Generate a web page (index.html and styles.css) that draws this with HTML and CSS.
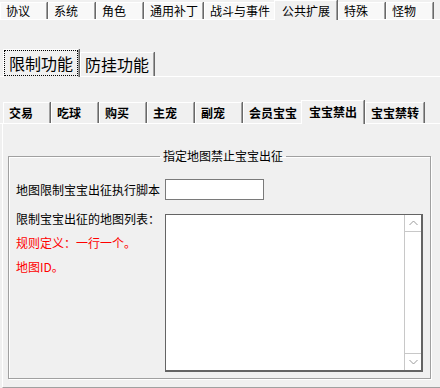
FILE: index.html
```html
<!DOCTYPE html>
<html lang="zh-CN">
<head>
  <meta charset="UTF-8" />
  <title>公共扩展 - 宝宝禁出</title>
  <link rel="stylesheet" href="styles.css">
</head>
<body>
  <div class="tabs top">
    <div class="tab">协议</div>
    <div class="tab">系统</div>
    <div class="tab">角色</div>
    <div class="tab">通用补丁</div>
    <div class="tab">战斗与事件</div>
    <div class="tab active">公共扩展</div>
    <div class="tab">特殊</div>
    <div class="tab">怪物</div>
  </div>

  <div class="tabs mid">
    <div class="tab active focus">限制功能</div>
    <div class="tab">防挂功能</div>
  </div>

  <div class="tabs sub">
    <div class="tab">交易</div>
    <div class="tab">吃球</div>
    <div class="tab">购买</div>
    <div class="tab">主宠</div>
    <div class="tab">副宠</div>
    <div class="tab">会员宝宝</div>
    <div class="tab active">宝宝禁出</div>
    <div class="tab">宝宝禁转</div>
  </div>

  <div class="page">
    <fieldset class="group">
      <legend>指定地图禁止宝宝出征</legend>
      <div class="form">
        <label class="field-label">地图限制宝宝出征执行脚本</label>
        <div class="textbox"></div>

        <div class="notes">
          <p>限制宝宝出征的地图列表：</p>
          <p class="red">规则定义：一行一个。</p>
          <p class="red">地图ID。</p>
        </div>
        <div class="memo">
          <div class="memo-text"></div>
          <div class="scrollbar">
            <div class="arrow up">
              <svg width="9" height="6" viewBox="0 0 9 6"><polyline points="0.5,5 4.5,1 8.5,5" fill="none" stroke="#9a9a9a" stroke-width="1"/></svg>
            </div>
            <div class="arrow down">
              <svg width="9" height="6" viewBox="0 0 9 6"><polyline points="0.5,1 4.5,5 8.5,1" fill="none" stroke="#9a9a9a" stroke-width="1"/></svg>
            </div>
          </div>
        </div>
      </div>
    </fieldset>
  </div>
</body>
</html>
```

FILE: styles.css
```css
* {
  box-sizing: border-box;
  margin: 0;
  padding: 0;
}

body {
  width: 440px;
  height: 388px;
  overflow: hidden;
  background: #f0f0f0;
  color: #000;
  font-family: "Noto Sans CJK SC", "Noto Sans", sans-serif;
  font-size: 12px;
}

/* tab strips */
.tabs {
  display: flex;
  align-items: flex-end;
  border-bottom: 1px solid #fff;
}

.tab {
  flex: none;
  min-width: 47px;
  margin-right: 1px;
  padding: 0 4px 0 5px;
  border-top: 1px solid #fff;
  border-left: 1px solid #fff;
  border-right: 1px solid #a0a0a0;
  box-shadow: 1px 0 0 #696969;
  white-space: nowrap;
  text-align: left;
}

.tab.active {
  position: relative;
  z-index: 1;
  margin-left: -2px;
  margin-bottom: -1px;
  padding: 0 6px 0 7px;
  background: #f0f0f0;
}

.top {
  height: 20px;
}

.top .tab {
  height: 17px;
  line-height: 16px;
  background: #f8f8f8;
}

.top .tab.active {
  height: 20px;
  line-height: 19px;
  background: #f0f0f0;
}

.mid {
  height: 57px;
  padding-left: 5px;
  font-size: 16px;
}

.mid .tab {
  height: 24px;
  line-height: 23px;
  padding: 0 4px;
}

.mid .tab.active {
  height: 28px;
  line-height: 26px;
  padding: 0 5px;
}

.tab.focus {
  outline: 1px dotted #000;
  outline-offset: -2px;
}

.sub {
  height: 47px;
  padding-left: 3px;
  font-weight: 700;
}

.sub .tab {
  height: 21px;
  line-height: 20px;
}

.sub .tab.active {
  height: 24px;
  line-height: 22px;
}

/* tab page */
.page {
  height: 264px;
  margin-left: 2px;
  padding: 25px 9px 0 5px;
  border-left: 1px solid #fff;
  border-bottom: 1px solid #a0a0a0;
}

.group {
  padding: 16px 6px 6px 7px;
  border: 1px solid #a0a0a0;
  box-shadow: inset 1px 1px 0 #fff, 1px 1px 0 #fff;
}

.group legend {
  margin-left: 144px;
  padding: 0 3px;
  line-height: 14px;
}

.form {
  display: grid;
  grid-template-columns: 149px 1fr;
  align-items: center;
  row-gap: 14px;
}

.textbox {
  width: 99px;
  height: 21px;
  background: #fff;
  border: 1px solid #7a7a7a;
}

.notes {
  align-self: start;
  margin-top: -7px;
  line-height: 24px;
}

.red {
  color: #ff0000;
}

.memo {
  display: flex;
  width: 258px;
  height: 158px;
  background: #fff;
  border: 1px solid #646464;
  border-right-width: 2px;
  border-bottom-width: 2px;
}

.memo-text {
  flex: 1;
}

.scrollbar {
  display: flex;
  flex-direction: column;
  justify-content: space-between;
  width: 17px;
  border-left: 1px solid #c8c8c8;
}

.arrow {
  display: flex;
  align-items: center;
  justify-content: center;
  height: 17px;
}

.arrow.up {
  border-bottom: 1px solid #c8c8c8;
}

.arrow.down {
  border-top: 1px solid #c8c8c8;
}
```
